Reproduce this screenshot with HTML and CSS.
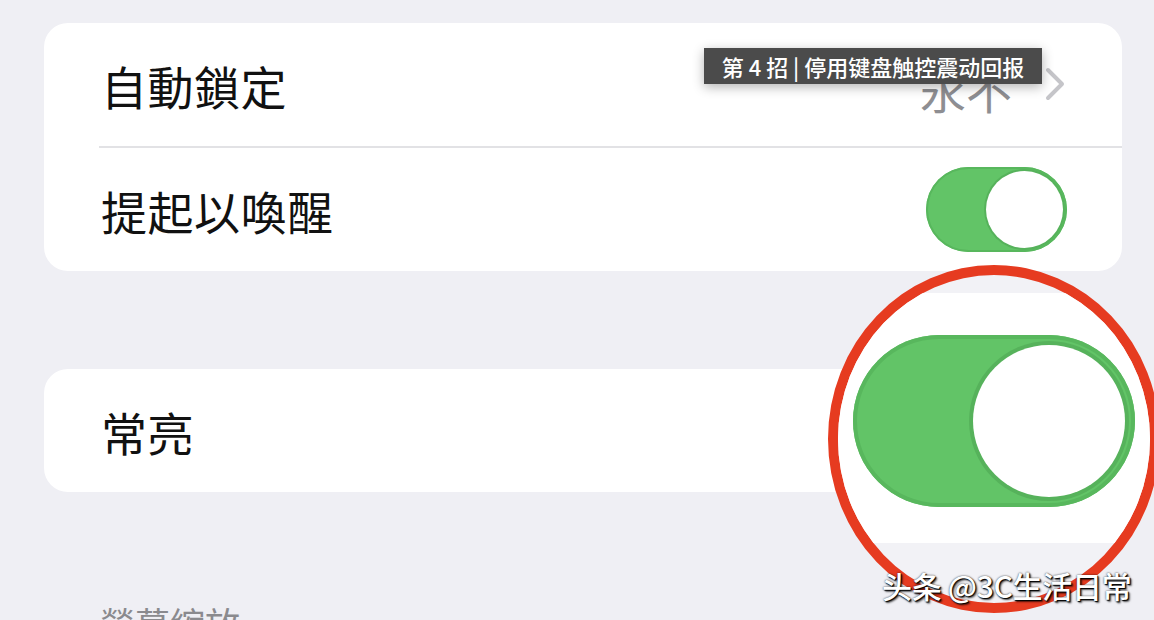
FILE: index.html
```html
<!DOCTYPE html>
<html lang="zh-Hant">
<head>
  <meta charset="UTF-8">
  <title>顯示與亮度</title>
  <link rel="stylesheet" href="styles.css">
</head>
<body>
  <div class="page">
    <div class="group">
      <div class="row">
        <span class="label">自動鎖定</span>
        <span class="value">永不</span>
        <svg class="chevron" width="20" height="34" viewBox="0 0 20 34">
          <path d="M3 3 L17 17 L3 31" fill="none" stroke="#c5c5c9" stroke-width="4" stroke-linecap="round" stroke-linejoin="round"/>
        </svg>
      </div>
      <div class="sep"></div>
      <div class="row">
        <span class="label">提起以喚醒</span>
        <div class="switch"><div class="knob"></div></div>
      </div>
    </div>

    <div class="group second">
      <div class="row">
        <span class="label">常亮</span>
      </div>
    </div>

    <div class="section-title">螢幕縮放</div>

    <div class="tip">第 4 招 | 停用键盘触控震动回报</div>

    <div class="lens">
      <div class="lens-card">
        <div class="switch big"><div class="knob"></div></div>
      </div>
    </div>

    <div class="mark">头条 @3C生活日常</div>
  </div>
</body>
</html>
```

FILE: styles.css
```css
html, body {
  margin: 0;
  height: 100%;
  overflow: hidden;
}
body {
  background: #efeff4;
  font-family: "Noto Sans CJK TC", "Noto Sans", sans-serif;
  color: #111;
}
.page {
  position: relative;
  height: 620px;
  padding: 23px 32px 0 44px;
  box-sizing: border-box;
}
.group {
  background: #fff;
  border-radius: 24px;
}
.group.second {
  margin-top: 98px;
}
.row {
  height: 123px;
  display: flex;
  align-items: center;
  padding: 0 55px 0 57px;
}
.label {
  font-size: 46px;
  line-height: 1;
  flex: 1;
  letter-spacing: 0.5px;
}
.value {
  font-size: 46px;
  line-height: 1;
  color: #8e8e92;
  margin-top: 8px;
}
.chevron {
  margin-left: 33px;
  margin-right: 2px;
  margin-top: -2px;
}
.sep {
  height: 2px;
  margin-left: 55px;
  background: #e2e2e5;
}
.switch {
  width: 141px;
  height: 85px;
  border-radius: 43px;
  background: #62c467;
  box-shadow: inset 0 0 0 2px #58b75d;
  display: flex;
  align-items: center;
  justify-content: flex-end;
  padding: 0 4px;
  box-sizing: border-box;
}
.knob {
  width: 77px;
  height: 77px;
  border-radius: 50%;
  background: #fff;
  box-shadow: 0 0 0 2px #56b25b;
}
.section-title {
  margin-top: 113px;
  padding-left: 56px;
  font-size: 35px;
  line-height: 35px;
  color: #8a8a8e;
}
.tip {
  position: absolute;
  left: 704px;
  top: 48px;
  width: 338px;
  height: 36px;
  background: #4b4b4b;
  color: #fff;
  font-family: "Noto Sans CJK SC", sans-serif;
  font-size: 22px;
  font-weight: 500;
  line-height: 36px;
  text-align: center;
  white-space: nowrap;
  box-shadow: 0 3px 12px rgba(0,0,0,0.3);
}
.lens {
  position: absolute;
  left: 828px;
  top: 265px;
  width: 332px;
  height: 348px;
  box-sizing: border-box;
  border: 10px solid #e63b20;
  border-radius: 50%;
  overflow: hidden;
  background: #f2f2f6;
}
.lens-card {
  margin-top: 18px;
  height: 250px;
  background: #fff;
  padding: 42px 0 0 15px;
  box-sizing: border-box;
}
.switch.big {
  width: 282px;
  height: 172px;
  border-radius: 86px;
  padding: 0 10px;
  box-shadow: inset 0 0 0 4px #58b75d;
}
.switch.big .knob {
  width: 152px;
  height: 152px;
  box-shadow: 0 0 0 4px #56b25b;
}
.mark {
  position: absolute;
  left: 882px;
  top: 563px;
  font-family: "Noto Sans CJK SC", sans-serif;
  font-size: 30px;
  font-weight: 500;
  color: #fff;
  letter-spacing: -0.3px;
  text-shadow: 1px 1px 1px #000, 2px 2px 2px rgba(0,0,0,0.6), 0 0 2px rgba(0,0,0,0.8);
}
```
